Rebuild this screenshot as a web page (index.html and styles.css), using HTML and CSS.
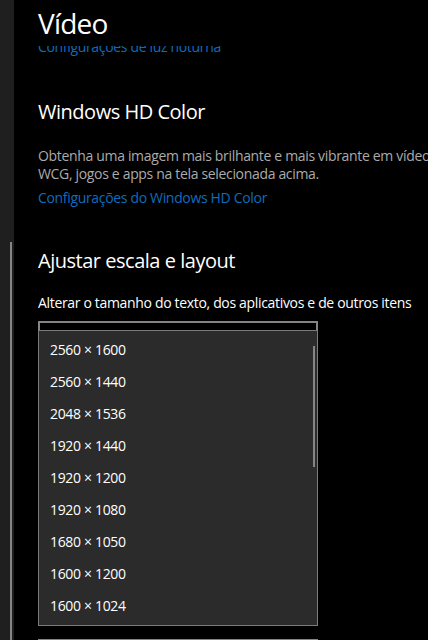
FILE: index.html
```html
<!DOCTYPE html>
<html lang="pt-BR">
<head>
<meta charset="utf-8">
<title>Vídeo</title>
<link rel="stylesheet" href="styles.css">
</head>
<body>
<div class="app">
  <aside class="sidebar"><div class="rail"></div></aside>
  <main class="main">
    <header class="header"><h1 class="title">Vídeo</h1></header>
    <div class="scroll">
      <div class="content">
        <a class="link link-clipped" href="#">Configurações de luz noturna</a>

        <h2 class="heading heading-hd">Windows HD Color</h2>
        <p class="desc">Obtenha uma imagem mais brilhante e mais vibrante em vídeos HDR e<br>WCG, jogos e apps na tela selecionada acima.</p>
        <a class="link link-hd" href="#">Configurações do Windows HD Color</a>

        <h2 class="heading heading-scale">Ajustar escala e layout</h2>
        <p class="label">Alterar o tamanho do texto, dos aplicativos e de outros itens</p>

        <div class="combo-wrap">
          <div class="combo"></div>
          <div class="popup">
            <ul class="list">
              <li class="item">2560 × 1600</li>
              <li class="item">2560 × 1440</li>
              <li class="item">2048 × 1536</li>
              <li class="item">1920 × 1440</li>
              <li class="item">1920 × 1200</li>
              <li class="item">1920 × 1080</li>
              <li class="item">1680 × 1050</li>
              <li class="item">1600 × 1200</li>
              <li class="item">1600 × 1024</li>
            </ul>
            <div class="thumb"></div>
          </div>
        </div>

        <div class="combo combo-next"></div>
      </div>
    </div>
  </main>
</div>
</body>
</html>
```
FILE: styles.css
```css
* { box-sizing: border-box; }
html, body {
  margin: 0;
  padding: 0;
  background: #000;
  height: 640px;
  overflow: hidden;
}
body {
  font-family: "Open Sans", "Noto Sans", sans-serif;
  color: #fff;
  font-size: 14px;
  letter-spacing: -0.33px;
}
.app {
  display: flex;
  height: 640px;
}
.sidebar {
  width: 14px;
  flex: 0 0 14px;
  background: #1f1f1f;
  display: flex;
  flex-direction: column;
  padding-top: 242px;
}
.rail {
  margin-left: 10px;
  width: 2px;
  flex: 1;
  background: #858585;
}
.main {
  flex: 1;
  min-width: 0;
  display: flex;
  flex-direction: column;
  overflow: hidden;
  padding-left: 24px;
}
.header {
  height: 46px;
  flex: 0 0 46px;
  padding-top: 5px;
  background: #000;
}
.title {
  margin: 0;
  font-size: 28px;
  line-height: 36px;
  font-weight: 400;
  letter-spacing: -0.8px;
  white-space: nowrap;
}
.scroll {
  flex: 1;
  overflow: hidden;
}
.content {
  width: 520px;
}
.link {
  display: block;
  color: #0f6cbd;
  text-decoration: none;
  line-height: 20px;
  white-space: nowrap;
}
.link-clipped {
  margin-top: -9.4px;
}
.heading {
  margin: 0;
  font-size: 20px;
  line-height: 28px;
  font-weight: 400;
  letter-spacing: -0.48px;
  white-space: nowrap;
}
.heading-hd { margin-top: 41.6px; }
.desc {
  margin: 21px 0 0;
  color: #ababab;
  line-height: 18px;
  white-space: nowrap;
}
.link-hd { margin-top: 5px; }
.heading-scale { margin-top: 38.6px; }
.label {
  margin: 18.4px 0 0;
  line-height: 20px;
  white-space: nowrap;
}
.combo-wrap {
  position: relative;
  margin-top: 7.4px;
  width: 280px;
}
.combo {
  width: 280px;
  height: 32px;
  border: 2px solid #858585;
  background: #000;
}
.combo-next {
  margin-top: 286px;
}
.popup {
  position: absolute;
  left: 0;
  top: 9px;
  width: 280px;
  background: #2b2b2b;
  border: 1px solid #7a7a7a;
}
.list {
  list-style: none;
  margin: 0;
  padding: 3px 0;
}
.item {
  height: 32px;
  line-height: 32px;
  padding-left: 11px;
  color: #fff;
  white-space: nowrap;
}
.thumb {
  position: absolute;
  right: 2px;
  top: 15px;
  width: 2px;
  height: 121px;
  background: #858585;
}
```
